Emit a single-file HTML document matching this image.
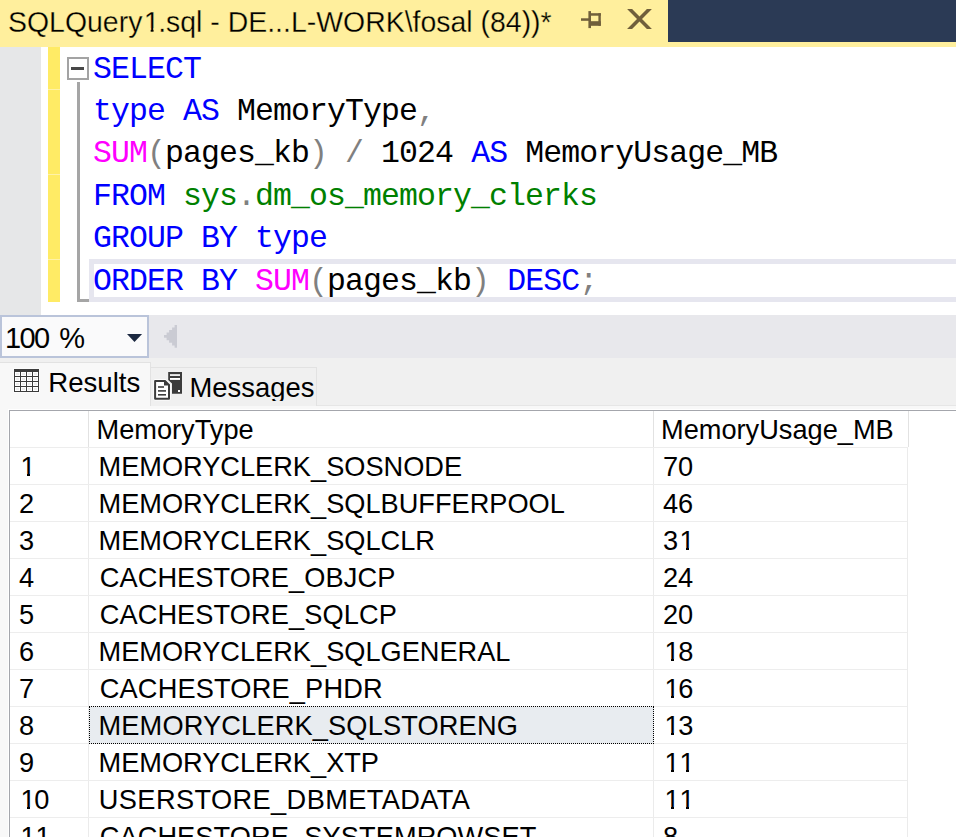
<!DOCTYPE html>
<html><head><meta charset="utf-8">
<style>
html,body{margin:0;padding:0;}
body{width:956px;height:837px;overflow:hidden;position:relative;background:#fff;font-family:"Liberation Sans",sans-serif;}
.abs{position:absolute;}
#title{left:0;top:0;width:956px;height:47px;background:#FFEF9D;}
#navy{left:668px;top:0;width:288px;height:42px;background:#2B3A55;}
#ttext{left:8px;top:1.5px;font-size:29.5px;line-height:40px;color:#000;white-space:pre;transform:scaleX(0.964);transform-origin:0 0;-webkit-text-stroke:0.3px #FFEF9D;}
#margin{left:0;top:47px;width:41px;height:268px;background:#E6E7E8;}
#chg{left:48px;top:47px;width:12px;height:255px;background:#FFEB65;}
.code{font-family:"Liberation Mono",monospace;font-size:31.5px;letter-spacing:-0.9px;white-space:pre;line-height:42.4px;}
#code{left:93px;top:48.5px;}
.kw{color:#0000FF}.fn{color:#FF00FF}.gr{color:#808080}.sy{color:#008000}
#curline{left:89px;top:259px;width:862px;height:33px;border:5px solid #E6E6EF;border-right:none;}
#fold{left:67px;top:57px;width:18px;height:19px;border:2px solid #A3A3A3;background:#fff;}
#foldminus{left:71.3px;top:67.4px;width:12.7px;height:2.5px;background:#484848;}
#oline{left:77px;top:82px;width:3px;height:220px;background:#A5A5A5;}
#oline2{left:77px;top:299px;width:12px;height:3px;background:#A5A5A5;}
#zoombar{left:0;top:315px;width:956px;height:43px;background:#E8E8EC;}
#combo{left:0;top:315px;width:145px;height:39px;border:2px solid #BAC4DA;background:#FAFAFB;}
#ctext{left:5px;top:321.5px;font-size:29px;line-height:32px;}
#tabs{left:0;top:358px;width:956px;height:47px;background:#F0F0F0;}
#pane{left:0;top:405px;width:956px;height:432px;background:#F8F8F8;}
#paneline{left:150px;top:405px;width:806px;height:1px;background:#E6E6E6;}
#tab1{left:0;top:362px;width:150px;height:43px;background:#F8F8F8;border-top:1px solid #E2E2E2;border-right:1px solid #E2E2E2;}
#tab2{left:151px;top:367px;width:165px;height:38px;background:#F0F0F0;border:1px solid #E2E2E2;border-bottom:none;border-left:none;}
#t2clip{left:0;top:0;width:166px;height:32.7px;overflow:hidden;}
#t1text{left:48.3px;top:367.3px;font-size:27.6px;line-height:32px;}
#t2text{left:38.5px;top:4.2px;font-size:27.4px;line-height:32px;}
#grid{left:9px;top:410px;width:947px;height:427px;background:#fff;border-left:1.5px solid #A4A6AC;border-top:1.5px solid #A4A6AC;box-shadow:-1px -1px 0 #fff;}
.g{font-size:27.2px;line-height:37px;white-space:pre;color:#000;}
.hl{height:1px;background:#E4E4E4;}
.vl{width:1px;background:#E4E4E4;}
.one{position:relative;left:1.4px;}
.one::before,.one::after{content:"";position:absolute;bottom:calc(0.212em - 0.6px);height:calc(0.0747em + 1.2px);background:var(--bg,#fff);z-index:1;}
.one::before{left:calc(0.0762em - 1px);width:calc(0.1753em + 0.9px);}
.one::after{left:calc(0.3398em + 0.1px);width:calc(0.1675em + 1.4px);}
</style></head><body>
<div id="title" class="abs"></div>
<div id="navy" class="abs"></div>
<div id="ttext" class="abs">SQLQuery<span class="one" style="--bg:#FFEF9D">1</span>.sql - DE...L-WORK\fosal (84))*</div>
<svg class="abs" style="left:570px;top:0" width="90" height="42" viewBox="570 0 90 42">
  <g fill="#705F3B">
    <rect x="581" y="18.3" width="8" height="2.5"/>
    <rect x="588.4" y="11.1" width="2.6" height="17"/>
    <rect x="590.9" y="13.2" width="9.9" height="2.5"/>
    <rect x="598.4" y="13.2" width="2.4" height="12.6"/>
    <rect x="590.9" y="21.2" width="9.9" height="4.6"/>
    <polygon points="627.1,8.9 632.1,8.9 651.9,29 646.9,29"/>
    <polygon points="646.9,8.9 651.9,8.9 632.1,29 627.1,29"/>
  </g>
</svg>
<div id="margin" class="abs"></div>
<div id="chg" class="abs"></div>
<div class="abs" style="left:48px;top:89.4px;width:12px;height:1px;background:#FFF2A8"></div><div class="abs" style="left:48px;top:174.2px;width:12px;height:1px;background:#FFF2A8"></div><div class="abs" style="left:48px;top:259.0px;width:12px;height:1px;background:#FFF2A8"></div>
<div id="curline" class="abs"></div>
<div id="fold" class="abs"></div>
<div id="foldminus" class="abs"></div>
<div id="oline" class="abs"></div>
<div id="oline2" class="abs"></div>
<div id="code" class="abs code"><span class="kw">SELECT</span>
<span class="kw">type AS</span> MemoryType<span class="gr">,</span>
<span class="fn">SUM</span><span class="gr">(</span>pages_kb<span class="gr">)</span> <span class="gr">/</span> 1024 <span class="kw">AS</span> MemoryUsage_MB
<span class="kw">FROM</span> <span class="sy">sys<span class="gr">.</span>dm_os_memory_clerks</span>
<span class="kw">GROUP BY type</span>
<span class="kw">ORDER BY</span> <span class="fn">SUM</span><span class="gr">(</span>pages_kb<span class="gr">)</span> <span class="kw">DESC</span><span class="gr">;</span></div>
<div id="zoombar" class="abs"></div>
<div id="combo" class="abs"></div>
<div id="ctext" class="abs"><span style="letter-spacing:-1.6px">100</span><span style="position:relative;left:2.5px"> %</span></div>
<svg class="abs" style="left:120px;top:320px" width="70" height="34" viewBox="120 320 70 34">
  <polygon points="127,334 142.1,334 134.5,341.9" fill="#1B2840"/>
  <path d="M177,325 V347.7 H174.6 V345.4 H172.1 V342.8 H169.1 V340.3 H166.6 V337.8 H164 V335.1 H166.6 V332.6 H169.1 V330.1 H172.1 V327.5 H174.6 V325 Z" fill="#CACBD3"/>
</svg>
<div id="tabs" class="abs"></div>
<div id="pane" class="abs"></div>
<div id="paneline" class="abs"></div>
<div id="tab1" class="abs"></div>
<div id="tab2" class="abs"><div id="t2clip" class="abs"><div id="t2text" class="abs">Messages</div></div></div>
<svg class="abs" style="left:10px;top:365px" width="34" height="30" viewBox="10 365 34 30">
  <rect x="13" y="368" width="27" height="25" fill="#FCFCFC"/>
  <rect x="14" y="369" width="25" height="23" fill="#3C3C3C"/>
  <rect x="15" y="372" width="5" height="4" fill="#fff"/><rect x="16" y="373" width="3" height="2" fill="#EDEDED"/><rect x="21" y="372" width="5" height="4" fill="#fff"/><rect x="22" y="373" width="3" height="2" fill="#EDEDED"/><rect x="27" y="372" width="5" height="4" fill="#fff"/><rect x="28" y="373" width="3" height="2" fill="#EDEDED"/><rect x="33" y="372" width="5" height="4" fill="#fff"/><rect x="34" y="373" width="3" height="2" fill="#EDEDED"/><rect x="15" y="377" width="5" height="4" fill="#fff"/><rect x="16" y="378" width="3" height="2" fill="#EDEDED"/><rect x="21" y="377" width="5" height="4" fill="#fff"/><rect x="22" y="378" width="3" height="2" fill="#EDEDED"/><rect x="27" y="377" width="5" height="4" fill="#fff"/><rect x="28" y="378" width="3" height="2" fill="#EDEDED"/><rect x="33" y="377" width="5" height="4" fill="#fff"/><rect x="34" y="378" width="3" height="2" fill="#EDEDED"/><rect x="15" y="382" width="5" height="4" fill="#fff"/><rect x="16" y="383" width="3" height="2" fill="#EDEDED"/><rect x="21" y="382" width="5" height="4" fill="#fff"/><rect x="22" y="383" width="3" height="2" fill="#EDEDED"/><rect x="27" y="382" width="5" height="4" fill="#fff"/><rect x="28" y="383" width="3" height="2" fill="#EDEDED"/><rect x="33" y="382" width="5" height="4" fill="#fff"/><rect x="34" y="383" width="3" height="2" fill="#EDEDED"/><rect x="15" y="387" width="5" height="4" fill="#fff"/><rect x="16" y="388" width="3" height="2" fill="#EDEDED"/><rect x="21" y="387" width="5" height="4" fill="#fff"/><rect x="22" y="388" width="3" height="2" fill="#EDEDED"/><rect x="27" y="387" width="5" height="4" fill="#fff"/><rect x="28" y="388" width="3" height="2" fill="#EDEDED"/><rect x="33" y="387" width="5" height="4" fill="#fff"/><rect x="34" y="388" width="3" height="2" fill="#EDEDED"/>
</svg>
<div id="t1text" class="abs">Results</div>
<svg class="abs" style="left:150px;top:368px" width="36" height="34" viewBox="150 368 36 34">
  <path d="M168.2,371.9 H182 V393.7 H172 V383.5 L168.2,380 Z" fill="#3C3C3C"/>
  <rect x="170" y="374.2" width="10" height="1.7" fill="#fff"/>
  <rect x="170" y="378" width="10" height="1.9" fill="#fff"/>
  <rect x="178" y="390" width="2" height="2" fill="#fff"/>
  <path d="M154.1,381 Q154.1,380 155.1,380 H165.4 L170,384.4 V398.8 Q170,399.8 169,399.8 H155.1 Q154.1,399.8 154.1,398.8 Z" fill="#3C3C3C" stroke="#fff" stroke-width="1.4" paint-order="stroke"/>
  <path d="M156.1,382 H164 V385.6 H168 V397.8 H156.1 Z" fill="#fff"/>
  <rect x="158" y="386.2" width="6" height="1.6" fill="#3C3C3C"/>
  <rect x="158" y="390.1" width="8" height="1.6" fill="#3C3C3C"/>
  <rect x="158" y="394" width="8" height="1.6" fill="#3C3C3C"/>
</svg>
<div id="grid" class="abs"></div>
<div id="rows">
<div class="abs hl" style="left:10px;top:447px;width:898px;background:#EDEDED"></div>
<div class="abs vl" style="left:88px;top:411px;height:36px;background:#E2E2E2"></div>
<div class="abs vl" style="left:88px;top:448px;height:389px;background:#EBEBEB"></div>
<div class="abs vl" style="left:653px;top:411px;height:36px;background:#E2E2E2"></div>
<div class="abs vl" style="left:653px;top:448px;height:389px;background:#EBEBEB"></div>
<div class="abs vl" style="left:908px;top:411px;height:36px;background:#E2E2E2"></div>
<div class="abs vl" style="left:907px;top:448px;height:389px;background:#EBEBEB"></div>
<div class="abs g" style="left:96.5px;top:411px">MemoryType</div>
<div class="abs g" style="left:661px;top:411px">MemoryUsage_MB</div>
<div class="abs" style="left:89px;top:706px;width:565px;height:38px;background:#E8ECF0"></div>
<div class="abs hl" style="left:10px;top:484px;width:897px;background:#EDEDED"></div>
<div class="abs g" style="left:19px;top:448px"><span class="one">1</span></div>
<div class="abs g" style="left:98.5px;top:448px;letter-spacing:0px">MEMORYCLERK_SOSNODE</div>
<div class="abs g" style="left:663px;top:448px">70</div>
<div class="abs hl" style="left:10px;top:521px;width:897px;background:#EDEDED"></div>
<div class="abs g" style="left:19px;top:485px">2</div>
<div class="abs g" style="left:98.5px;top:485px;letter-spacing:0px">MEMORYCLERK_SQLBUFFERPOOL</div>
<div class="abs g" style="left:663px;top:485px">46</div>
<div class="abs hl" style="left:10px;top:558px;width:897px;background:#EDEDED"></div>
<div class="abs g" style="left:19px;top:522px">3</div>
<div class="abs g" style="left:98.5px;top:522px;letter-spacing:0px">MEMORYCLERK_SQLCLR</div>
<div class="abs g" style="left:663px;top:522px">3<span class="one">1</span></div>
<div class="abs hl" style="left:10px;top:595px;width:897px;background:#EDEDED"></div>
<div class="abs g" style="left:19px;top:559px">4</div>
<div class="abs g" style="left:99.7px;top:559px;letter-spacing:0.1px">CACHESTORE_OBJCP</div>
<div class="abs g" style="left:663px;top:559px">24</div>
<div class="abs hl" style="left:10px;top:632px;width:897px;background:#EDEDED"></div>
<div class="abs g" style="left:19px;top:596px">5</div>
<div class="abs g" style="left:99.7px;top:596px;letter-spacing:0.1px">CACHESTORE_SQLCP</div>
<div class="abs g" style="left:663px;top:596px">20</div>
<div class="abs hl" style="left:10px;top:669px;width:897px;background:#EDEDED"></div>
<div class="abs g" style="left:19px;top:633px">6</div>
<div class="abs g" style="left:98.5px;top:633px;letter-spacing:0px">MEMORYCLERK_SQLGENERAL</div>
<div class="abs g" style="left:663px;top:633px"><span class="one">1</span>8</div>
<div class="abs hl" style="left:10px;top:706px;width:897px;background:#EDEDED"></div>
<div class="abs g" style="left:19px;top:670px">7</div>
<div class="abs g" style="left:99.7px;top:670px;letter-spacing:0.18px">CACHESTORE_PHDR</div>
<div class="abs g" style="left:663px;top:670px"><span class="one">1</span>6</div>
<div class="abs hl" style="left:10px;top:743px;width:897px;background:#EDEDED"></div>
<div class="abs g" style="left:19px;top:707px">8</div>
<div class="abs g" style="left:98.5px;top:707px;letter-spacing:0.16px">MEMORYCLERK_SQLSTORENG</div>
<div class="abs g" style="left:663px;top:707px"><span class="one">1</span>3</div>
<div class="abs hl" style="left:10px;top:780px;width:897px;background:#EDEDED"></div>
<div class="abs g" style="left:19px;top:744px">9</div>
<div class="abs g" style="left:98.5px;top:744px;letter-spacing:0px">MEMORYCLERK_XTP</div>
<div class="abs g" style="left:663px;top:744px"><span class="one">1</span><span class="one">1</span></div>
<div class="abs hl" style="left:10px;top:817px;width:897px;background:#EDEDED"></div>
<div class="abs g" style="left:19px;top:781px"><span class="one">1</span>0</div>
<div class="abs g" style="left:98.8px;top:781px;letter-spacing:0.4px">USERSTORE_DBMETADATA</div>
<div class="abs g" style="left:663px;top:781px"><span class="one">1</span><span class="one">1</span></div>
<div class="abs hl" style="left:10px;top:854px;width:897px;background:#EDEDED"></div>
<div class="abs g" style="left:19px;top:818px"><span class="one">1</span><span class="one">1</span></div>
<div class="abs g" style="left:99.7px;top:818px;letter-spacing:0.1px">CACHESTORE_SYSTEMROWSET</div>
<div class="abs g" style="left:663px;top:818px">8</div>
<div class="abs" style="left:89px;top:706px;width:563px;height:36px;border:1px dotted #000"></div>
</div>
</body></html>
